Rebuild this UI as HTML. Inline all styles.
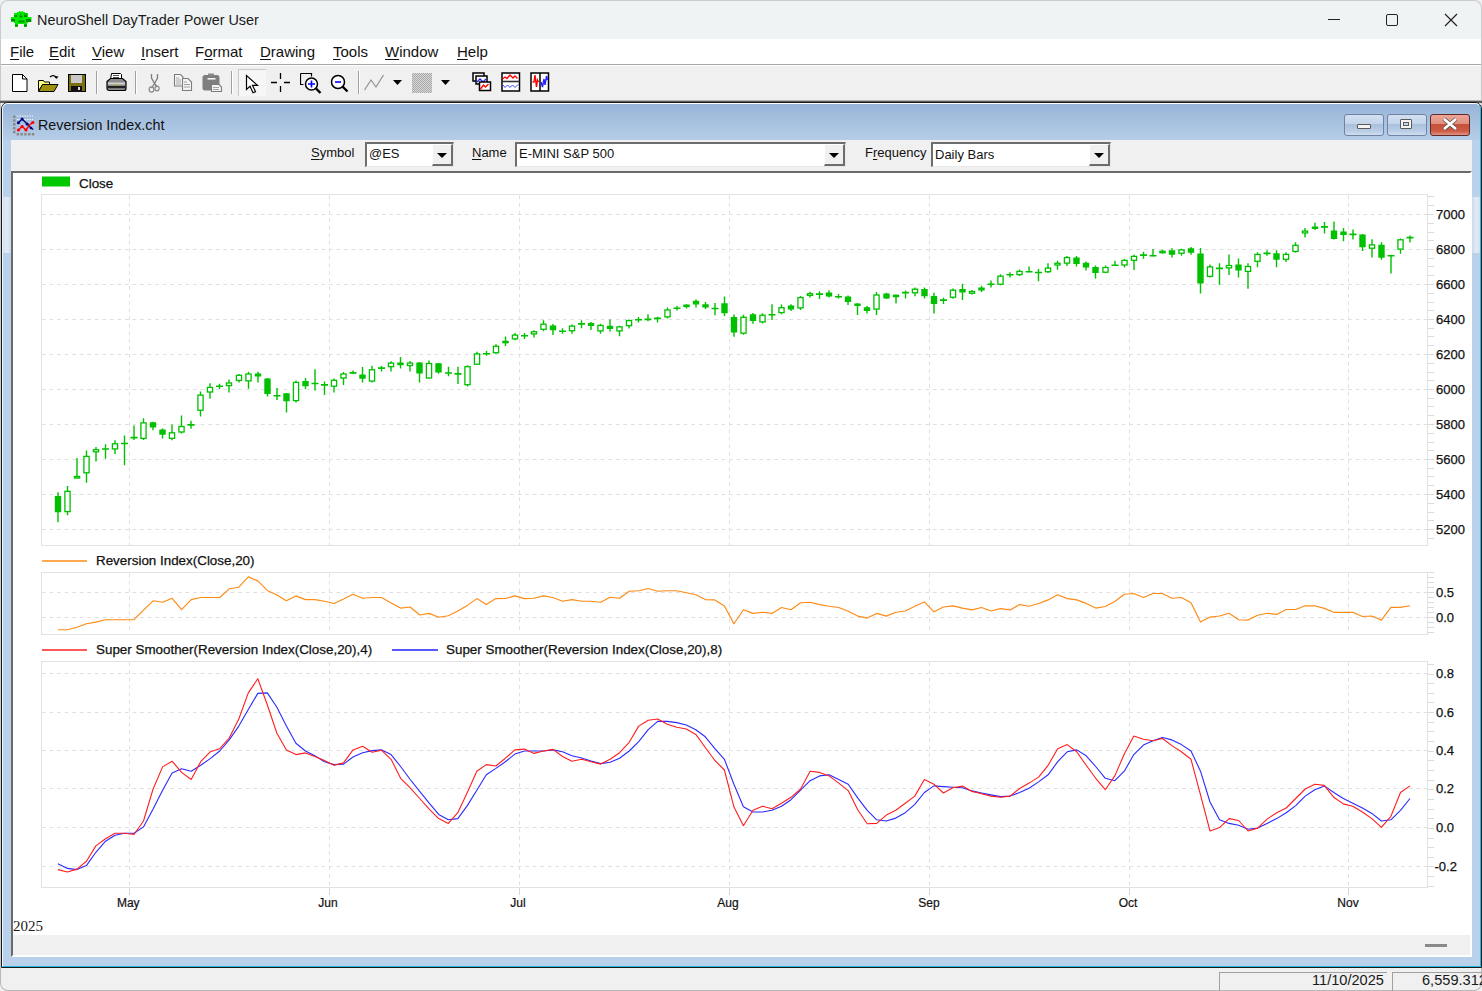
<!DOCTYPE html>
<html><head><meta charset="utf-8"><style>
*{box-sizing:border-box}
body{margin:0;width:1482px;height:991px;overflow:hidden;position:relative;background:#f0f0f0;font-family:"Liberation Sans",sans-serif;color:#000}
.a{position:absolute}
.ax{font-family:"Liberation Sans",sans-serif;font-size:13px;fill:#111;stroke:#111;stroke-width:0.25px}
.mo{font-family:"Liberation Sans",sans-serif;font-size:12px;fill:#111;stroke:#111;stroke-width:0.2px}
.yr{font-family:"Liberation Serif",serif;font-size:15px;fill:#1a1a1a}
.lg{font-family:"Liberation Sans",sans-serif;font-size:13.4px;fill:#111;stroke:#111;stroke-width:0.25px}
.menu span{position:absolute;top:42.5px;font-size:15px;color:#111}
.u{text-decoration:underline;text-underline-offset:2px}
.lbl{position:absolute;top:145px;font-size:13px;color:#111}
.combo{position:absolute;top:142px;height:25px;background:#fff;border-top:2px solid #6d6d6d;border-left:2px solid #6d6d6d;border-right:1px solid #e8e8e8;border-bottom:1px solid #e8e8e8}
.combo .t{position:absolute;left:2px;top:2px;font-size:13px;color:#111;white-space:nowrap}
.combo .b{position:absolute;right:0;top:0;width:21px;height:22px;background:#f0f0f0;border-right:2px solid #6d6d6d;border-bottom:2px solid #6d6d6d;border-left:1px solid #fff;border-top:1px solid #fff}
.combo .b:after{content:"";position:absolute;left:4px;top:8px;border-left:5px solid transparent;border-right:5px solid transparent;border-top:5px solid #000}
</style></head><body>
<!-- title bar -->
<div class="a" style="left:0;top:0;width:1482px;height:39px;background:#f0f3f3;border-radius:8px 8px 0 0;border:1px solid #c9cdd1;border-bottom:none"></div>
<svg class="a" style="left:0;top:0" width="40" height="34">
<path d="M19 11h1.5v1h1v-1h1.5v1h2v1h3v4h3.5v5h-3.5v1h-1v4h-3v-3h-6v3h-3v-4h-1v-1.5h-3V17h3v-4h3v-1h2z" fill="#00f000"/>
<path d="M11 19h4v2.5h-4zM26 19h5v3h-5zM18.5 20.5h6v2h-6zM14.5 15h2.5v2h-2.5zM19.5 15.5h3v2h-3zM24 15h3v2h-3zM17 13.5h1v1h-1zM20 13.5h1.5v1H20zM23.5 13.5h3.5v1h-3.5zM15 24.5h3v2h-3zM24 24.5h3v2h-3z" fill="#008c00"/>
</svg>
<div class="a" style="left:37px;top:12px;font-size:14.4px;color:#1a1a1a;white-space:nowrap">NeuroShell DayTrader Power User</div>
<div class="a" style="left:1328px;top:19px;width:12px;height:1px;background:#222"></div>
<div class="a" style="left:1386px;top:14px;width:12px;height:12px;border:1.2px solid #222;border-radius:2px"></div>
<svg class="a" style="left:1444px;top:13px" width="14" height="14"><path d="M1 1L13 13M13 1L1 13" stroke="#222" stroke-width="1.2"/></svg>
<div class="a" style="left:0;top:39px;width:1px;height:930px;background:#c8c8c8"></div>
<div class="a" style="left:1481px;top:39px;width:1px;height:930px;background:#c8c8c8"></div>
<!-- menu -->
<div class="a" style="left:1px;top:39px;width:1480px;height:25px;background:#fff"></div>
<div class="a menu">
<span style="left:10px"><span class="u" style="position:static">F</span>ile</span>
<span style="left:49px"><span class="u" style="position:static">E</span>dit</span>
<span style="left:92px"><span class="u" style="position:static">V</span>iew</span>
<span style="left:141px"><span class="u" style="position:static">I</span>nsert</span>
<span style="left:195px">F<span class="u" style="position:static">o</span>rmat</span>
<span style="left:260px"><span class="u" style="position:static">D</span>rawing</span>
<span style="left:333px"><span class="u" style="position:static">T</span>ools</span>
<span style="left:385px"><span class="u" style="position:static">W</span>indow</span>
<span style="left:457px"><span class="u" style="position:static">H</span>elp</span>
</div>
<div class="a" style="left:1px;top:64px;width:1480px;height:1px;background:#a8a8a8"></div>
<div class="a" style="left:1px;top:65px;width:1480px;height:1px;background:#fff"></div>
<!-- toolbar -->
<svg class="a" style="left:12px;top:74px" width="16" height="18"><path d="M0.5 0.5h10l4.5 4.5v12.5h-14.5z" fill="#fff" stroke="#000"/><path d="M10.5 0.5v4.5h4.5" fill="none" stroke="#000"/></svg>
<svg class="a" style="left:38px;top:74px" width="21" height="18"><path d="M12 3c2-2 5-2 6 1" fill="none" stroke="#000" stroke-width="1.3"/><path d="M17 2l1.5 3 2-2.5z" fill="#000"/><path d="M0.5 6.5h5l1 1.5h5v3H4.5l-4 6z" fill="#ffff80" stroke="#000"/><path d="M0.5 17.5l4-7h15.5l-4 7z" fill="#a09010" stroke="#000"/></svg>
<svg class="a" style="left:68px;top:74px" width="18" height="18"><rect x="0.5" y="0.5" width="17" height="17" fill="#7a7010" stroke="#000"/><rect x="3" y="1" width="11" height="8" fill="#c8c8c8"/><rect x="3" y="12" width="11" height="6" fill="#111"/><rect x="10" y="13" width="2" height="3" fill="#ddd"/></svg>
<div class="a" style="left:96px;top:71px;width:1px;height:23px;background:#a0a0a0;box-shadow:1px 0 0 #fff"></div>
<svg class="a" style="left:106px;top:73px" width="21" height="19"><path d="M5.5 0.5h9l1 1v5h-11z" fill="#fff" stroke="#000"/><path d="M7 2.5h6M7 4.5h6" stroke="#555"/><path d="M1 8.5l3.5-3h12l3.5 3v7c0 1-1 2-2 2H3c-1 0-2-1-2-2z" fill="#8c8c8c" stroke="#000" stroke-width="1.2"/><rect x="2" y="9.5" width="17" height="2" fill="#d0d0d0"/><rect x="1.5" y="13" width="18" height="2.2" fill="#222"/><path d="M9 12.3l1-1 1 1 1-1" stroke="#f0e000" stroke-width="1"/></svg>
<div class="a" style="left:135px;top:71px;width:1px;height:23px;background:#a0a0a0;box-shadow:1px 0 0 #fff"></div>
<svg class="a" style="left:140px;top:66px" width="90" height="32"><path d="M11.5 8v4l3 5.5M17.5 8v4l-3 5.5M14.5 17.5l-3 4.5M14.5 17.5l2.5 3.5" stroke="#7c7c7c" stroke-width="1.3" fill="none"/><ellipse cx="11.5" cy="23.5" rx="2.3" ry="2.6" fill="none" stroke="#8a8a8a" stroke-width="1.2"/><ellipse cx="17" cy="22.5" rx="2.1" ry="2.4" fill="none" stroke="#8a8a8a" stroke-width="1.2"/><path d="M34.5 8.5h6l2.5 2.5v9h-8.5z" fill="#f4f4f4" stroke="#7c7c7c" stroke-width="1.1"/><path d="M36 12h3M36 14h5M36 16h5M36 18h5" stroke="#a8a8a8"/><path d="M42.5 12.5h5.5l3.5 3.5v8.5h-9z" fill="#f4f4f4" stroke="#7c7c7c" stroke-width="1.1"/><path d="M44 16h3M44 18.5h6M44 21h6" stroke="#a0a0a0"/><rect x="62.5" y="9" width="17" height="15.5" rx="2.5" fill="#7e7e7e"/><rect x="68" y="7.5" width="6" height="2" fill="#8a8a8a"/><rect x="67.5" y="12" width="8" height="1.6" fill="#f0f0f0"/><path d="M71.5 18.5h7.5l2.5 2.5v4.5h-10z" fill="#f4f4f4" stroke="#7c7c7c" stroke-width="1.1"/><path d="M73 21.5h6M73 23.5h6" stroke="#a0a0a0"/></svg>
<div class="a" style="left:231px;top:71px;width:1px;height:23px;background:#a0a0a0;box-shadow:1px 0 0 #fff"></div>
<div class="a" style="left:238px;top:69px;width:28px;height:27px;background:#f6f6f6;border-top:1px solid #c8c8c8;border-left:1px solid #c8c8c8"></div>
<svg class="a" style="left:245px;top:74px" width="16" height="21"><path d="M1.5 1.5v14l3.5-3.2 3 6.5 2.5-1.2-3-6.2h5z" fill="#fff" stroke="#000" stroke-width="1.2"/></svg>
<svg class="a" style="left:270px;top:72px" width="21" height="21"><path d="M10.5 1v6M10.5 14v6M1 10.5h6M14 10.5h6" stroke="#000" stroke-width="1.3"/></svg>
<svg class="a" style="left:300px;top:72px" width="22" height="22"><path d="M0.5 1.5h11v3M0.5 1.5v11h3" fill="none" stroke="#000" stroke-width="1.2"/><circle cx="11.5" cy="12" r="6" fill="#fff" stroke="#000" stroke-width="1.5"/><path d="M16 16.5l4.5 4.5" stroke="#000" stroke-width="2.4"/><path d="M11.5 8.5v7M8 12h7" stroke="#0000ff" stroke-width="1.6"/></svg>
<svg class="a" style="left:330px;top:74px" width="20" height="20"><circle cx="8" cy="8" r="6.5" fill="#fff" stroke="#000" stroke-width="1.5"/><path d="M12.5 12.5l5 5" stroke="#000" stroke-width="2.4"/><path d="M5 8h6" stroke="#0000ff" stroke-width="1.6"/></svg>
<div class="a" style="left:358px;top:71px;width:1px;height:23px;background:#a0a0a0;box-shadow:1px 0 0 #fff"></div>
<svg class="a" style="left:364px;top:74px" width="21" height="17"><path d="M0.5 16L7 6l5 7L19.5 1" fill="none" stroke="#909090" stroke-width="1.2"/></svg>
<svg class="a" style="left:393px;top:80px" width="10" height="6"><path d="M0 0h9L4.5 5z" fill="#000"/></svg>
<div class="a" style="left:412px;top:73px;width:20px;height:20px;background:repeating-conic-gradient(#a8a8a8 0 25%,#d8d8d8 0 50%) 0 0/2px 2px"></div>
<svg class="a" style="left:441px;top:80px" width="10" height="6"><path d="M0 0h9L4.5 5z" fill="#000"/></svg>
<svg class="a" style="left:472px;top:72px" width="20" height="20"><rect x="1" y="1" width="11" height="8" fill="#fff" stroke="#000" stroke-width="1.5"/><rect x="4" y="4" width="11" height="8" fill="#fff" stroke="#000" stroke-width="1.5"/><path d="M5 10l3-3 3 3 3-3" stroke="#2020ff" stroke-width="1.3" fill="none"/><rect x="7.5" y="10" width="11" height="8.5" fill="#fff" stroke="#000" stroke-width="1.5"/><path d="M8.5 17l3-4 2 2 3-3" stroke="#ff0000" stroke-width="1.4" fill="none"/></svg>
<svg class="a" style="left:501px;top:72px" width="20" height="20"><rect x="1" y="1" width="17.5" height="18" fill="#fff" stroke="#000" stroke-width="1.5"/><path d="M1 9.5h17.5" stroke="#333" stroke-width="1.6"/><path d="M1.5 7l2.5-2 2 1.5 3-3.5 3 3 2-2 2.5 2.5" stroke="#ff0000" stroke-width="1.3" fill="none"/><path d="M1.5 12.5l2.5 3 2.5-2.5 2.5 2.5 2.5-2.5 2.5 2.5 3-3" stroke="#4040ff" stroke-width="1" fill="none"/></svg>
<svg class="a" style="left:530px;top:72px" width="20" height="20"><rect x="1" y="1" width="17.5" height="18" fill="#fff" stroke="#000" stroke-width="1.5"/><path d="M10 1v18" stroke="#000" stroke-width="1.5"/><path d="M2.5 10h1.5l1-7 1.5 12 1-7 1 2" stroke="#ff0000" stroke-width="1.4" fill="none"/><path d="M11 10l1.5 5 1.5-8 1 6 1.5-9 1 4" stroke="#2020ff" stroke-width="1.4" fill="none"/></svg>
<div class="a" style="left:0;top:100px;width:1482px;height:1px;background:#b4b4b4"></div>
<div class="a" style="left:0;top:101px;width:1482px;height:2px;background:#5a5a5a"></div>
<!-- child window -->
<div class="a" style="left:1px;top:102px;width:1481px;height:866px;background:#b9d1ea;border:1px solid #1a1a1a;border-radius:7px 7px 0 0"></div>
<div class="a" style="left:2px;top:103px;width:1479px;height:864px;border:1px solid #e8f4ff;border-top-color:#fff;border-bottom-color:#20b8e0;border-right-color:#20b8e0;border-radius:6px 6px 0 0"></div>
<div class="a" style="left:3px;top:104px;width:1477px;height:36px;background:linear-gradient(#98b4d8,#a8c2e0 55%,#b5cde7);border-radius:5px 5px 0 0"></div>
<svg class="a" style="left:0;top:100px" width="40" height="40">
<g fill="#8a8a8a"><rect x="13" y="15.5" width="2.5" height="2.5"/><rect x="13" y="19.3" width="2.5" height="2.5"/><rect x="13" y="23.1" width="2.5" height="2.5"/><rect x="13" y="27" width="2.5" height="2.5"/><rect x="13" y="30.8" width="2.5" height="2.5"/><rect x="16.6" y="33" width="2.5" height="2.5"/><rect x="20.4" y="33" width="2.5" height="2.5"/><rect x="24.2" y="33" width="2.5" height="2.5"/><rect x="28" y="33" width="2.5" height="2.5"/><rect x="31.8" y="33" width="2.5" height="2.5"/></g>
<path d="M17 16h16M17 19.5h16" stroke="#f4f4f4" stroke-width="1.2" stroke-dasharray="1.5 1"/>
<path d="M18.4 22.8L22.1 19l5 5 4 4 2.2 1.5" stroke="#000080" stroke-width="1.4" fill="none"/>
<g fill="#000080"><circle cx="18.4" cy="22.8" r="1.5"/><circle cx="22.1" cy="19" r="1.5"/><circle cx="27.1" cy="24" r="1.5"/><circle cx="31" cy="28" r="1.3"/></g>
<path d="M18.4 30l3.7-3.5 3.9 3.5 3.5-5 3.3-2.5" stroke="#ff0000" stroke-width="1.4" fill="none"/>
<g fill="#ff0000"><circle cx="18.4" cy="30" r="1.6"/><circle cx="22.1" cy="26.5" r="1.6"/><circle cx="26" cy="30" r="1.6"/><circle cx="32.8" cy="22.5" r="1.6"/></g>
</svg>
<div class="a" style="left:38px;top:117px;font-size:14.3px;color:#111;white-space:nowrap">Reversion Index.cht</div>
<div class="a" style="left:1344px;top:114px;width:40px;height:22px;border:1px solid #6f84a3;border-radius:3px;background:linear-gradient(#d2e0f1,#c3d5eb 45%,#a9bfdb 46%,#b9cde6 80%,#cfdff0)"></div>
<div class="a" style="left:1357px;top:124px;width:14px;height:5px;background:#f4f4f4;border:1px solid #5a5a5a;border-radius:1px"></div>
<div class="a" style="left:1387px;top:114px;width:40px;height:22px;border:1px solid #6f84a3;border-radius:3px;background:linear-gradient(#d2e0f1,#c3d5eb 45%,#a9bfdb 46%,#b9cde6 80%,#cfdff0)"></div>
<div class="a" style="left:1400px;top:119px;width:12px;height:10px;background:#f4f4f4;border:1px solid #5a5a5a;border-radius:1px"></div>
<div class="a" style="left:1403px;top:122px;width:6px;height:4px;border:1px solid #5a5a5a;background:#c8d8ec"></div>
<div class="a" style="left:1430px;top:114px;width:40px;height:22px;border:1px solid #5e2a2a;border-radius:3px;background:linear-gradient(#eea596,#e09080 45%,#c8503a 46%,#cc5a44 80%,#e09484)"></div>
<svg class="a" style="left:1441px;top:117px" width="18" height="14"><path d="M3 2l12 10M15 2L3 12" stroke="#555" stroke-width="4.2"/><path d="M3 2l12 10M15 2L3 12" stroke="#fff" stroke-width="2.6"/></svg>

<div class="a" style="left:3px;top:197px;width:8px;height:56px;background:linear-gradient(90deg,#d5e2f0,#e2ebf4 50%,#c9daee)"></div>
<div class="a" style="left:1472px;top:197px;width:8px;height:56px;background:linear-gradient(90deg,#c9daee,#e2ebf4 50%,#d5e2f0)"></div>
<!-- symbol bar -->
<div class="a" style="left:11px;top:140px;width:1461px;height:31px;background:#f0f0f0"></div>
<div class="lbl" style="left:311px"><span class="u">S</span>ymbol</div>
<div class="combo" style="left:365px;width:89px"><span class="t" style="left:2px">@ES</span><div class="b"></div></div>
<div class="lbl" style="left:472px"><span class="u">N</span>ame</div>
<div class="combo" style="left:515px;width:331px"><span class="t">E-MINI S&amp;P 500</span><div class="b"></div></div>
<div class="lbl" style="left:865px">F<span class="u">r</span>equency</div>
<div class="combo" style="left:931px;width:180px"><span class="t" style="top:3px">Daily Bars</span><div class="b"></div></div>
<!-- chart frame -->
<div class="a" style="left:11px;top:171px;width:1461px;height:786px;background:#f0f0f0;border-top:2px solid #6a6a6a;border-left:2px solid #6a6a6a;border-right:2px solid #fff;border-bottom:2px solid #fff"></div>
<div class="a" style="left:13px;top:173px;width:1457px;height:762px;background:#fff"></div>
<div class="a" style="left:1425px;top:944px;width:22px;height:3px;background:#8a8a8a"></div>
<svg class="a" style="left:0;top:0" width="1482" height="991"><rect x="41.5" y="194.5" width="1386.0" height="351.0" fill="#fff" stroke="#e2e2e2" stroke-width="1"/><line x1="129.5" y1="195.5" x2="129.5" y2="545.5" stroke="#e0e0e0" stroke-width="1" stroke-dasharray="3.7 3.85"/><line x1="329.5" y1="195.5" x2="329.5" y2="545.5" stroke="#e0e0e0" stroke-width="1" stroke-dasharray="3.7 3.85"/><line x1="519.5" y1="195.5" x2="519.5" y2="545.5" stroke="#e0e0e0" stroke-width="1" stroke-dasharray="3.7 3.85"/><line x1="729.5" y1="195.5" x2="729.5" y2="545.5" stroke="#e0e0e0" stroke-width="1" stroke-dasharray="3.7 3.85"/><line x1="929.5" y1="195.5" x2="929.5" y2="545.5" stroke="#e0e0e0" stroke-width="1" stroke-dasharray="3.7 3.85"/><line x1="1129.5" y1="195.5" x2="1129.5" y2="545.5" stroke="#e0e0e0" stroke-width="1" stroke-dasharray="3.7 3.85"/><line x1="1348.5" y1="195.5" x2="1348.5" y2="545.5" stroke="#e0e0e0" stroke-width="1" stroke-dasharray="3.7 3.85"/><rect x="41.5" y="572.5" width="1386.0" height="62.0" fill="#fff" stroke="#e2e2e2" stroke-width="1"/><line x1="129.5" y1="573.5" x2="129.5" y2="634.5" stroke="#e0e0e0" stroke-width="1" stroke-dasharray="3.7 3.85"/><line x1="329.5" y1="573.5" x2="329.5" y2="634.5" stroke="#e0e0e0" stroke-width="1" stroke-dasharray="3.7 3.85"/><line x1="519.5" y1="573.5" x2="519.5" y2="634.5" stroke="#e0e0e0" stroke-width="1" stroke-dasharray="3.7 3.85"/><line x1="729.5" y1="573.5" x2="729.5" y2="634.5" stroke="#e0e0e0" stroke-width="1" stroke-dasharray="3.7 3.85"/><line x1="929.5" y1="573.5" x2="929.5" y2="634.5" stroke="#e0e0e0" stroke-width="1" stroke-dasharray="3.7 3.85"/><line x1="1129.5" y1="573.5" x2="1129.5" y2="634.5" stroke="#e0e0e0" stroke-width="1" stroke-dasharray="3.7 3.85"/><line x1="1348.5" y1="573.5" x2="1348.5" y2="634.5" stroke="#e0e0e0" stroke-width="1" stroke-dasharray="3.7 3.85"/><rect x="41.5" y="661.5" width="1386.0" height="226.0" fill="#fff" stroke="#e2e2e2" stroke-width="1"/><line x1="129.5" y1="662.5" x2="129.5" y2="887.5" stroke="#e0e0e0" stroke-width="1" stroke-dasharray="3.7 3.85"/><line x1="329.5" y1="662.5" x2="329.5" y2="887.5" stroke="#e0e0e0" stroke-width="1" stroke-dasharray="3.7 3.85"/><line x1="519.5" y1="662.5" x2="519.5" y2="887.5" stroke="#e0e0e0" stroke-width="1" stroke-dasharray="3.7 3.85"/><line x1="729.5" y1="662.5" x2="729.5" y2="887.5" stroke="#e0e0e0" stroke-width="1" stroke-dasharray="3.7 3.85"/><line x1="929.5" y1="662.5" x2="929.5" y2="887.5" stroke="#e0e0e0" stroke-width="1" stroke-dasharray="3.7 3.85"/><line x1="1129.5" y1="662.5" x2="1129.5" y2="887.5" stroke="#e0e0e0" stroke-width="1" stroke-dasharray="3.7 3.85"/><line x1="1348.5" y1="662.5" x2="1348.5" y2="887.5" stroke="#e0e0e0" stroke-width="1" stroke-dasharray="3.7 3.85"/><line x1="42" y1="214.5" x2="1427" y2="214.5" stroke="#e0e0e0" stroke-width="1" stroke-dasharray="3.7 3.85"/><text x="1436" y="219" class="ax">7000</text><line x1="42" y1="249.5" x2="1427" y2="249.5" stroke="#e0e0e0" stroke-width="1" stroke-dasharray="3.7 3.85"/><text x="1436" y="254" class="ax">6800</text><line x1="42" y1="284.5" x2="1427" y2="284.5" stroke="#e0e0e0" stroke-width="1" stroke-dasharray="3.7 3.85"/><text x="1436" y="289" class="ax">6600</text><line x1="42" y1="319.5" x2="1427" y2="319.5" stroke="#e0e0e0" stroke-width="1" stroke-dasharray="3.7 3.85"/><text x="1436" y="324" class="ax">6400</text><line x1="42" y1="354.5" x2="1427" y2="354.5" stroke="#e0e0e0" stroke-width="1" stroke-dasharray="3.7 3.85"/><text x="1436" y="359" class="ax">6200</text><line x1="42" y1="389.5" x2="1427" y2="389.5" stroke="#e0e0e0" stroke-width="1" stroke-dasharray="3.7 3.85"/><text x="1436" y="394" class="ax">6000</text><line x1="42" y1="424.5" x2="1427" y2="424.5" stroke="#e0e0e0" stroke-width="1" stroke-dasharray="3.7 3.85"/><text x="1436" y="429" class="ax">5800</text><line x1="42" y1="459.5" x2="1427" y2="459.5" stroke="#e0e0e0" stroke-width="1" stroke-dasharray="3.7 3.85"/><text x="1436" y="464" class="ax">5600</text><line x1="42" y1="494.5" x2="1427" y2="494.5" stroke="#e0e0e0" stroke-width="1" stroke-dasharray="3.7 3.85"/><text x="1436" y="499" class="ax">5400</text><line x1="42" y1="529.5" x2="1427" y2="529.5" stroke="#e0e0e0" stroke-width="1" stroke-dasharray="3.7 3.85"/><text x="1436" y="534" class="ax">5200</text><line x1="1428" y1="196.5" x2="1434" y2="196.5" stroke="#dadada"/><line x1="1428" y1="205.5" x2="1434" y2="205.5" stroke="#dadada"/><line x1="1428" y1="214.5" x2="1434" y2="214.5" stroke="#dadada"/><line x1="1428" y1="223.5" x2="1434" y2="223.5" stroke="#dadada"/><line x1="1428" y1="232.5" x2="1434" y2="232.5" stroke="#dadada"/><line x1="1428" y1="240.5" x2="1434" y2="240.5" stroke="#dadada"/><line x1="1428" y1="249.5" x2="1434" y2="249.5" stroke="#dadada"/><line x1="1428" y1="258.5" x2="1434" y2="258.5" stroke="#dadada"/><line x1="1428" y1="266.5" x2="1434" y2="266.5" stroke="#dadada"/><line x1="1428" y1="275.5" x2="1434" y2="275.5" stroke="#dadada"/><line x1="1428" y1="284.5" x2="1434" y2="284.5" stroke="#dadada"/><line x1="1428" y1="293.5" x2="1434" y2="293.5" stroke="#dadada"/><line x1="1428" y1="302.5" x2="1434" y2="302.5" stroke="#dadada"/><line x1="1428" y1="310.5" x2="1434" y2="310.5" stroke="#dadada"/><line x1="1428" y1="319.5" x2="1434" y2="319.5" stroke="#dadada"/><line x1="1428" y1="328.5" x2="1434" y2="328.5" stroke="#dadada"/><line x1="1428" y1="336.5" x2="1434" y2="336.5" stroke="#dadada"/><line x1="1428" y1="345.5" x2="1434" y2="345.5" stroke="#dadada"/><line x1="1428" y1="354.5" x2="1434" y2="354.5" stroke="#dadada"/><line x1="1428" y1="363.5" x2="1434" y2="363.5" stroke="#dadada"/><line x1="1428" y1="372.5" x2="1434" y2="372.5" stroke="#dadada"/><line x1="1428" y1="380.5" x2="1434" y2="380.5" stroke="#dadada"/><line x1="1428" y1="389.5" x2="1434" y2="389.5" stroke="#dadada"/><line x1="1428" y1="398.5" x2="1434" y2="398.5" stroke="#dadada"/><line x1="1428" y1="406.5" x2="1434" y2="406.5" stroke="#dadada"/><line x1="1428" y1="415.5" x2="1434" y2="415.5" stroke="#dadada"/><line x1="1428" y1="424.5" x2="1434" y2="424.5" stroke="#dadada"/><line x1="1428" y1="433.5" x2="1434" y2="433.5" stroke="#dadada"/><line x1="1428" y1="442.5" x2="1434" y2="442.5" stroke="#dadada"/><line x1="1428" y1="450.5" x2="1434" y2="450.5" stroke="#dadada"/><line x1="1428" y1="459.5" x2="1434" y2="459.5" stroke="#dadada"/><line x1="1428" y1="468.5" x2="1434" y2="468.5" stroke="#dadada"/><line x1="1428" y1="476.5" x2="1434" y2="476.5" stroke="#dadada"/><line x1="1428" y1="485.5" x2="1434" y2="485.5" stroke="#dadada"/><line x1="1428" y1="494.5" x2="1434" y2="494.5" stroke="#dadada"/><line x1="1428" y1="503.5" x2="1434" y2="503.5" stroke="#dadada"/><line x1="1428" y1="512.5" x2="1434" y2="512.5" stroke="#dadada"/><line x1="1428" y1="520.5" x2="1434" y2="520.5" stroke="#dadada"/><line x1="1428" y1="529.5" x2="1434" y2="529.5" stroke="#dadada"/><line x1="1428" y1="538.5" x2="1434" y2="538.5" stroke="#dadada"/><line x1="42" y1="592.5" x2="1427" y2="592.5" stroke="#e0e0e0" stroke-width="1" stroke-dasharray="3.7 3.85"/><text x="1436" y="597" class="ax">0.5</text><line x1="42" y1="617.5" x2="1427" y2="617.5" stroke="#e0e0e0" stroke-width="1" stroke-dasharray="3.7 3.85"/><text x="1436" y="622" class="ax">0.0</text><line x1="1428" y1="572.5" x2="1434" y2="572.5" stroke="#dadada"/><line x1="1428" y1="577.5" x2="1434" y2="577.5" stroke="#dadada"/><line x1="1428" y1="582.5" x2="1434" y2="582.5" stroke="#dadada"/><line x1="1428" y1="587.5" x2="1434" y2="587.5" stroke="#dadada"/><line x1="1428" y1="592.5" x2="1434" y2="592.5" stroke="#dadada"/><line x1="1428" y1="597.5" x2="1434" y2="597.5" stroke="#dadada"/><line x1="1428" y1="602.5" x2="1434" y2="602.5" stroke="#dadada"/><line x1="1428" y1="607.5" x2="1434" y2="607.5" stroke="#dadada"/><line x1="1428" y1="612.5" x2="1434" y2="612.5" stroke="#dadada"/><line x1="1428" y1="617.5" x2="1434" y2="617.5" stroke="#dadada"/><line x1="1428" y1="622.5" x2="1434" y2="622.5" stroke="#dadada"/><line x1="1428" y1="627.5" x2="1434" y2="627.5" stroke="#dadada"/><line x1="1428" y1="632.5" x2="1434" y2="632.5" stroke="#dadada"/><line x1="42" y1="673.5" x2="1427" y2="673.5" stroke="#e0e0e0" stroke-width="1" stroke-dasharray="3.7 3.85"/><text x="1436" y="678" class="ax">0.8</text><line x1="42" y1="712.5" x2="1427" y2="712.5" stroke="#e0e0e0" stroke-width="1" stroke-dasharray="3.7 3.85"/><text x="1436" y="717" class="ax">0.6</text><line x1="42" y1="750.5" x2="1427" y2="750.5" stroke="#e0e0e0" stroke-width="1" stroke-dasharray="3.7 3.85"/><text x="1436" y="755" class="ax">0.4</text><line x1="42" y1="788.5" x2="1427" y2="788.5" stroke="#e0e0e0" stroke-width="1" stroke-dasharray="3.7 3.85"/><text x="1436" y="793" class="ax">0.2</text><line x1="42" y1="827.5" x2="1427" y2="827.5" stroke="#e0e0e0" stroke-width="1" stroke-dasharray="3.7 3.85"/><text x="1436" y="832" class="ax">0.0</text><line x1="42" y1="866.5" x2="1427" y2="866.5" stroke="#e0e0e0" stroke-width="1" stroke-dasharray="3.7 3.85"/><text x="1434.5" y="871" class="ax">-0.2</text><line x1="1428" y1="664.5" x2="1434" y2="664.5" stroke="#dadada"/><line x1="1428" y1="674.5" x2="1434" y2="674.5" stroke="#dadada"/><line x1="1428" y1="683.5" x2="1434" y2="683.5" stroke="#dadada"/><line x1="1428" y1="693.5" x2="1434" y2="693.5" stroke="#dadada"/><line x1="1428" y1="702.5" x2="1434" y2="702.5" stroke="#dadada"/><line x1="1428" y1="712.5" x2="1434" y2="712.5" stroke="#dadada"/><line x1="1428" y1="722.5" x2="1434" y2="722.5" stroke="#dadada"/><line x1="1428" y1="731.5" x2="1434" y2="731.5" stroke="#dadada"/><line x1="1428" y1="741.5" x2="1434" y2="741.5" stroke="#dadada"/><line x1="1428" y1="751.5" x2="1434" y2="751.5" stroke="#dadada"/><line x1="1428" y1="760.5" x2="1434" y2="760.5" stroke="#dadada"/><line x1="1428" y1="770.5" x2="1434" y2="770.5" stroke="#dadada"/><line x1="1428" y1="780.5" x2="1434" y2="780.5" stroke="#dadada"/><line x1="1428" y1="789.5" x2="1434" y2="789.5" stroke="#dadada"/><line x1="1428" y1="799.5" x2="1434" y2="799.5" stroke="#dadada"/><line x1="1428" y1="809.5" x2="1434" y2="809.5" stroke="#dadada"/><line x1="1428" y1="818.5" x2="1434" y2="818.5" stroke="#dadada"/><line x1="1428" y1="828.5" x2="1434" y2="828.5" stroke="#dadada"/><line x1="1428" y1="838.5" x2="1434" y2="838.5" stroke="#dadada"/><line x1="1428" y1="847.5" x2="1434" y2="847.5" stroke="#dadada"/><line x1="1428" y1="857.5" x2="1434" y2="857.5" stroke="#dadada"/><line x1="1428" y1="866.5" x2="1434" y2="866.5" stroke="#dadada"/><line x1="1428" y1="876.5" x2="1434" y2="876.5" stroke="#dadada"/><line x1="1428" y1="886.5" x2="1434" y2="886.5" stroke="#dadada"/><line x1="129.5" y1="888" x2="129.5" y2="895" stroke="#d6d6d6"/><text x="128.3" y="906.5" class="mo" text-anchor="middle">May</text><line x1="329.5" y1="888" x2="329.5" y2="895" stroke="#d6d6d6"/><text x="328" y="906.5" class="mo" text-anchor="middle">Jun</text><line x1="519.5" y1="888" x2="519.5" y2="895" stroke="#d6d6d6"/><text x="518" y="906.5" class="mo" text-anchor="middle">Jul</text><line x1="729.5" y1="888" x2="729.5" y2="895" stroke="#d6d6d6"/><text x="728" y="906.5" class="mo" text-anchor="middle">Aug</text><line x1="929.5" y1="888" x2="929.5" y2="895" stroke="#d6d6d6"/><text x="929" y="906.5" class="mo" text-anchor="middle">Sep</text><line x1="1129.5" y1="888" x2="1129.5" y2="895" stroke="#d6d6d6"/><text x="1128" y="906.5" class="mo" text-anchor="middle">Oct</text><line x1="1348.5" y1="888" x2="1348.5" y2="895" stroke="#d6d6d6"/><text x="1348" y="906.5" class="mo" text-anchor="middle">Nov</text><text x="13" y="931" class="yr">2025</text><rect x="42" y="176.5" width="28" height="10" fill="#00c800"/><text x="79" y="187.5" class="lg">Close</text><line x1="42" y1="561" x2="87" y2="561" stroke="#ff8c1a" stroke-width="1.3"/><text x="96" y="565" class="lg">Reversion Index(Close,20)</text><line x1="42" y1="650" x2="87" y2="650" stroke="#ff2020" stroke-width="1.3"/><text x="96" y="654" class="lg">Super Smoother(Reversion Index(Close,20),4)</text><line x1="392" y1="650" x2="438" y2="650" stroke="#2020ff" stroke-width="1.3"/><text x="446" y="654" class="lg">Super Smoother(Reversion Index(Close,20),8)</text><path d="M58 492.2V522.3M67.5 485.9V515.2M77 458.1V478.6M86.5 450.4V482.7M96 447V461.4M105.5 444.3V458.7M115 440.3V453.9M124.5 435.5V465.2M134 425.5V439.9M143.5 418.2V439.9M153 421.7V430.3M162.5 428.4V438.6M172 424.6V440.3M181.5 415.6V433.6M191 420.7V428.8M200.5 391.6V416.5M210 383.3V398.7M219.5 383.7V389.1M229 379.5V392.5M239 374.1V382.4M248.5 371.8V388.7M258 371.8V382.4M267.5 378V396.4M277 388.1V400M286.5 392.9V412.5M296 380.5V402.5M305.5 378V389.1M315 369.3V390.4M324.5 381.6V395.1M334 378.6V392.6M343.5 372.1V384.9M353 370.5V373.8M362.5 367.1V382.4M372 365.7V382.4M381.5 365.7V371.5M391 361.3V371.5M400.5 357.1V368.6M410 360.9V371.5M419.5 361.9V382.4M429 360.6V378.6M438.5 362.9V373.8M448.5 366.7V376.3M458 366.7V383.9M467.5 365.2V386.4M477 351.7V364.8M486.5 351V355.8M496 344.3V353.8M505.5 336.6V346M515 333.1V340.2M524.5 333.1V338.9M534 330.3V337.5M543.5 320.3V331.2M553 324.1V335.1M562.5 328.3V333.7M572 324.5V333.7M581.5 320.3V328.3M591 321.9V330.1M600.5 323.8V333.8M610 319.4V331.5M619.5 325.7V336.3M629 319.4V328.6M638.5 317.1V322.5M648 314.2V321.3M657.5 316.7V322.5M667.5 307.5V318.6M677 306V310.4M686.5 304.3V308.5M696 299.5V307.5M705.5 302.1V309M715 303.1V315.2M724.5 296.6V316.1M734 314.6V336.7M743.5 314.8V334.7M753 312.9V323.8M762.5 313.3V323.4M772 304.3V320M781.5 304.6V314.2M791 304.3V311M800.5 296V310M810 291.8V297.5M819.5 291.2V298.9M829 290.3V297.5M838.5 294.1V298.5M848 295.6V305M857.5 303V315.1M867 305.9V313.5M876.5 292.1V315.1M886.5 292.8V299.1M896 294.4V303.6M905.5 290.5V298.6M915 287.6V296.3M924.5 287.6V298.6M934 292.8V313.5M943.5 297.8V303.9M953 288.6V298.8M962.5 283.8V300.1M972 290.1V294.4M981.5 285.7V292.1M991 280.6V287.6M1000.5 274.2V285.2M1010 272.3V277.5M1019.5 269.4V276.1M1029 266.6V272.3M1038.5 269V281.3M1048 263.3V272.9M1057.5 260.8V269.8M1067 256V266M1076.5 256V266.6M1086 261.4V270.4M1095.5 265.6V278.6M1105.5 265.6V273.3M1115 260.8V266M1124.5 258.9V267.5M1134 254.8V270M1143.5 251.7V258.8M1153 249.1V256.2M1162.5 249.7V253.4M1172 248.3V257.4M1181.5 248.7V255.8M1191 247.1V254.8M1200.5 248.1V293.6M1210 264.5V277.4M1219.5 263.3V284.7M1229 254.4V275M1238.5 258.4V277.4M1248 263.3V288.8M1257.5 252.3V267.3M1267 250.3V255.8M1276.5 250.3V267.3M1286 252.3V261.9M1295.5 242.2V252.8M1305 228.1V237.6M1315 222.8V230.1M1324.5 222V233.5M1334 221.4V239.6M1343.5 228.1V241.2M1353 229.5V239.6M1362.5 234.1V251.1M1372 239.2V257.4M1381.5 242.2V259.8M1391 254.8V273.4M1400.5 238.6V253.8M1410 235.5V242.6" stroke="#00c000" stroke-width="1.4" fill="none"/><path d="M54.8 496.1h6.4V512.2h-6.4zM102 448.2h7v1.6h-7zM121 442.7h7v1.6h-7zM130.5 436.8h7v1.6h-7zM149.8 422.3h6.4V427.4h-6.4zM159.3 429.4h6.4V434.7h-6.4zM187.5 424.1h7v1.6h-7zM216 385.5h7v1.6h-7zM254.8 373.4h6.4V376.6h-6.4zM264.3 378.6h6.4V393.9h-6.4zM273.5 395h7v1.6h-7zM283.3 393.3h6.4V401.2h-6.4zM302.3 380.9h6.4V386.2h-6.4zM311.5 382.7h7v1.6h-7zM321 384.1h7v1.6h-7zM349.5 372.1h7v1.6h-7zM359.3 374.4h6.4V378.8h-6.4zM378 367.3h7v1.6h-7zM397.3 362.5h6.4V365.2h-6.4zM416.3 362.5h6.4V373.4h-6.4zM435.3 363.2h6.4V372.4h-6.4zM445 372.2h7v1.6h-7zM454.5 373.1h7v1.6h-7zM483 352.9h7v1.6h-7zM521 335h7v1.6h-7zM549.8 325.5h6.4V330.3h-6.4zM559 330.5h7v1.6h-7zM578 323.1h7v1.6h-7zM587.8 322.9h6.4V326.1h-6.4zM606.8 325.7h6.4V329h-6.4zM635 319h7v1.6h-7zM644.5 318.6h7v1.6h-7zM654 317.6h7v1.6h-7zM673.5 307.5h7v1.6h-7zM692.8 300.8h6.4V304.6h-6.4zM702.3 304.3h6.4V307.5h-6.4zM711.5 307.7h7v1.6h-7zM721.3 303.3h6.4V313.3h-6.4zM730.8 317.1h6.4V332.4h-6.4zM749.8 314.2h6.4V320.9h-6.4zM768.5 313.9h7v1.6h-7zM787.8 305.6h6.4V309.4h-6.4zM816 293.3h7v1.6h-7zM825.8 292.6h6.4V296.6h-6.4zM835 296h7v1.6h-7zM844.8 296.6h6.4V302.1h-6.4zM854.3 303.4h6.4V305.9h-6.4zM863.8 307.2h6.4V311h-6.4zM883.3 293.4h6.4V298.6h-6.4zM902 291.8h7v1.6h-7zM921.3 289h6.4V296.3h-6.4zM930.8 295.9h6.4V303.9h-6.4zM940 299.3h7v1.6h-7zM959.3 289h6.4V292.4h-6.4zM978.3 287.6h6.4V290.5h-6.4zM987.5 283.5h7v1.6h-7zM1006.5 273.9h7v1.6h-7zM1025.5 271h7v1.6h-7zM1035 271.7h7v1.6h-7zM1073.3 257.5h6.4V264.1h-6.4zM1082.8 262.7h6.4V267.5h-6.4zM1092.3 266.9h6.4V272.9h-6.4zM1111.5 264.5h7v1.6h-7zM1140 254.3h7v1.6h-7zM1149.5 254.9h7v1.6h-7zM1168.8 250.3h6.4V254.8h-6.4zM1187.8 248.3h6.4V252.8h-6.4zM1197.3 253.4h6.4V283.5h-6.4zM1216 267.6h7v1.6h-7zM1235.3 264.5h6.4V270.6h-6.4zM1263.5 252.6h7v1.6h-7zM1273.3 253.2h6.4V259.8h-6.4zM1311.8 226.4h6.4V229.1h-6.4zM1321 226.1h7v1.6h-7zM1330.8 230.5h6.4V239h-6.4zM1340.3 231.5h6.4V234.9h-6.4zM1349.5 233.6h7v1.6h-7zM1359.3 234.5h6.4V247.3h-6.4zM1378.3 244.7h6.4V257.8h-6.4zM1387.5 254.9h7v1.6h-7zM1406.5 236.8h7v1.6h-7z" fill="#00c000"/><rect x="64.9" y="491.3" width="5.2" height="20.3" fill="#fff" stroke="#00c000" stroke-width="1.3"/><rect x="74.4" y="476.5" width="5.2" height="1.5" fill="#fff" stroke="#00c000" stroke-width="1.3"/><rect x="83.9" y="456.4" width="5.2" height="16.4" fill="#fff" stroke="#00c000" stroke-width="1.3"/><rect x="93.4" y="449.7" width="5.2" height="2.1" fill="#fff" stroke="#00c000" stroke-width="1.3"/><rect x="112.4" y="443.8" width="5.2" height="5.1" fill="#fff" stroke="#00c000" stroke-width="1.3"/><rect x="140.9" y="422.9" width="5.2" height="15.5" fill="#fff" stroke="#00c000" stroke-width="1.3"/><rect x="169.4" y="432.8" width="5.2" height="5.5" fill="#fff" stroke="#00c000" stroke-width="1.3"/><rect x="178.9" y="426.5" width="5.2" height="5.5" fill="#fff" stroke="#00c000" stroke-width="1.3"/><rect x="197.9" y="395.1" width="5.2" height="15.1" fill="#fff" stroke="#00c000" stroke-width="1.3"/><rect x="207.4" y="387.4" width="5.2" height="4.6" fill="#fff" stroke="#00c000" stroke-width="1.3"/><rect x="226.4" y="383" width="5.2" height="2.6" fill="#fff" stroke="#00c000" stroke-width="1.3"/><rect x="236.4" y="375.3" width="5.2" height="5.1" fill="#fff" stroke="#00c000" stroke-width="1.3"/><rect x="245.9" y="374" width="5.2" height="6.9" fill="#fff" stroke="#00c000" stroke-width="1.3"/><rect x="293.4" y="382.4" width="5.2" height="18.2" fill="#fff" stroke="#00c000" stroke-width="1.3"/><rect x="331.4" y="380.3" width="5.2" height="5.9" fill="#fff" stroke="#00c000" stroke-width="1.3"/><rect x="340.9" y="374" width="5.2" height="4" fill="#fff" stroke="#00c000" stroke-width="1.3"/><rect x="369.4" y="369.8" width="5.2" height="11.3" fill="#fff" stroke="#00c000" stroke-width="1.3"/><rect x="388.4" y="363.1" width="5.2" height="3.6" fill="#fff" stroke="#00c000" stroke-width="1.3"/><rect x="407.4" y="363.1" width="5.2" height="2.4" fill="#fff" stroke="#00c000" stroke-width="1.3"/><rect x="426.4" y="363.5" width="5.2" height="14.5" fill="#fff" stroke="#00c000" stroke-width="1.3"/><rect x="464.9" y="366.7" width="5.2" height="18" fill="#fff" stroke="#00c000" stroke-width="1.3"/><rect x="474.4" y="353.9" width="5.2" height="10.3" fill="#fff" stroke="#00c000" stroke-width="1.3"/><rect x="493.4" y="346.2" width="5.2" height="6.5" fill="#fff" stroke="#00c000" stroke-width="1.3"/><rect x="502.9" y="341.4" width="5.2" height="1.3" fill="#fff" stroke="#00c000" stroke-width="1.3"/><rect x="512.4" y="335.1" width="5.2" height="3.8" fill="#fff" stroke="#00c000" stroke-width="1.3"/><rect x="531.4" y="331.8" width="5.2" height="2.1" fill="#fff" stroke="#00c000" stroke-width="1.3"/><rect x="540.9" y="324.2" width="5.2" height="5.1" fill="#fff" stroke="#00c000" stroke-width="1.3"/><rect x="569.4" y="326.1" width="5.2" height="4.6" fill="#fff" stroke="#00c000" stroke-width="1.3"/><rect x="597.9" y="325.4" width="5.2" height="5.5" fill="#fff" stroke="#00c000" stroke-width="1.3"/><rect x="616.9" y="326.9" width="5.2" height="4" fill="#fff" stroke="#00c000" stroke-width="1.3"/><rect x="626.4" y="320.6" width="5.2" height="5.1" fill="#fff" stroke="#00c000" stroke-width="1.3"/><rect x="664.9" y="310" width="5.2" height="6.9" fill="#fff" stroke="#00c000" stroke-width="1.3"/><rect x="683.9" y="305.2" width="5.2" height="1.3" fill="#fff" stroke="#00c000" stroke-width="1.3"/><rect x="740.9" y="317.3" width="5.2" height="15.9" fill="#fff" stroke="#00c000" stroke-width="1.3"/><rect x="759.9" y="315.2" width="5.2" height="6.7" fill="#fff" stroke="#00c000" stroke-width="1.3"/><rect x="778.9" y="307.7" width="5.2" height="4.9" fill="#fff" stroke="#00c000" stroke-width="1.3"/><rect x="797.9" y="297.6" width="5.2" height="10.3" fill="#fff" stroke="#00c000" stroke-width="1.3"/><rect x="807.4" y="293.7" width="5.2" height="1.7" fill="#fff" stroke="#00c000" stroke-width="1.3"/><rect x="873.9" y="295" width="5.2" height="14.1" fill="#fff" stroke="#00c000" stroke-width="1.3"/><rect x="893.4" y="295.3" width="5.2" height="1.3" fill="#fff" stroke="#00c000" stroke-width="1.3"/><rect x="912.4" y="289.2" width="5.2" height="3.6" fill="#fff" stroke="#00c000" stroke-width="1.3"/><rect x="950.4" y="290.2" width="5.2" height="7" fill="#fff" stroke="#00c000" stroke-width="1.3"/><rect x="969.4" y="291.5" width="5.2" height="1.7" fill="#fff" stroke="#00c000" stroke-width="1.3"/><rect x="997.9" y="276.2" width="5.2" height="8" fill="#fff" stroke="#00c000" stroke-width="1.3"/><rect x="1016.9" y="271.4" width="5.2" height="3.2" fill="#fff" stroke="#00c000" stroke-width="1.3"/><rect x="1045.4" y="268.1" width="5.2" height="3.6" fill="#fff" stroke="#00c000" stroke-width="1.3"/><rect x="1054.9" y="263.3" width="5.2" height="1.7" fill="#fff" stroke="#00c000" stroke-width="1.3"/><rect x="1064.4" y="257.6" width="5.2" height="5.5" fill="#fff" stroke="#00c000" stroke-width="1.3"/><rect x="1102.9" y="267.5" width="5.2" height="4.7" fill="#fff" stroke="#00c000" stroke-width="1.3"/><rect x="1121.9" y="260.4" width="5.2" height="4.6" fill="#fff" stroke="#00c000" stroke-width="1.3"/><rect x="1131.4" y="256.4" width="5.2" height="3.9" fill="#fff" stroke="#00c000" stroke-width="1.3"/><rect x="1159.9" y="251.3" width="5.2" height="1.4" fill="#fff" stroke="#00c000" stroke-width="1.3"/><rect x="1178.9" y="249.9" width="5.2" height="3.3" fill="#fff" stroke="#00c000" stroke-width="1.3"/><rect x="1207.4" y="266.9" width="5.2" height="9.5" fill="#fff" stroke="#00c000" stroke-width="1.3"/><rect x="1226.4" y="265.5" width="5.2" height="2.4" fill="#fff" stroke="#00c000" stroke-width="1.3"/><rect x="1245.4" y="266.5" width="5.2" height="4.9" fill="#fff" stroke="#00c000" stroke-width="1.3"/><rect x="1254.9" y="254.4" width="5.2" height="6.9" fill="#fff" stroke="#00c000" stroke-width="1.3"/><rect x="1283.4" y="254.4" width="5.2" height="4.9" fill="#fff" stroke="#00c000" stroke-width="1.3"/><rect x="1292.9" y="245.3" width="5.2" height="6.1" fill="#fff" stroke="#00c000" stroke-width="1.3"/><rect x="1302.4" y="231.1" width="5.2" height="1.8" fill="#fff" stroke="#00c000" stroke-width="1.3"/><rect x="1369.4" y="244.9" width="5.2" height="3.3" fill="#fff" stroke="#00c000" stroke-width="1.3"/><rect x="1397.9" y="239.8" width="5.2" height="9.3" fill="#fff" stroke="#00c000" stroke-width="1.3"/><polyline points="57.9,629.7 67.4,629.7 76.9,627.2 86.4,623.7 95.9,622.1 105.5,619.7 115,619.7 124.5,619.7 134,619.7 143.5,610.2 153.1,600.8 162.6,602.3 172.1,598.3 181.6,609.7 191.2,599.6 200.7,597.5 210.2,597.5 219.7,597.5 229.2,588.8 238.8,587.2 248.3,576.9 257.8,580.9 267.3,590.4 276.9,595.1 286.4,600.7 295.9,595.9 305.4,599.6 314.9,599.6 324.5,601.2 334,603.5 343.5,599.1 353,594.3 362.6,598.3 372.1,597.5 381.6,597.5 391.1,603.1 400.6,608.1 410.2,607 419.7,615 429.2,613.4 438.7,617.3 448.3,615.7 457.8,611 467.3,605.4 476.8,598.6 486.3,604.6 495.9,598.6 505.4,598.5 514.9,595.9 524.4,598.6 534,598.3 543.5,595.9 553,597.5 562.5,601.2 572,599.6 581.6,601.2 591.1,601.2 600.6,602.3 610.1,597.2 619.6,598.3 629.2,591.2 638.7,590.7 648.2,588.5 657.7,591.2 667.3,590.7 676.8,590.7 686.3,592.8 695.8,594.8 705.3,599.6 714.9,599.9 724.4,605.9 733.9,623.7 743.4,609.7 753,613.4 762.5,612.3 772,613.4 781.5,607.5 791,609.7 800.6,602.7 810.1,602.3 819.6,604.6 829.1,606.2 838.7,607.5 848.2,611.3 857.7,616.1 867.2,618.1 876.7,613.4 886.3,616.1 895.8,612.3 905.3,611 914.8,606.2 924.4,601.9 933.9,611.8 943.4,607 952.9,605.9 962.4,608.1 972,609.9 981.5,607.5 991,611 1000.5,608.6 1010.1,609.9 1019.6,604.6 1029.1,606.2 1038.6,603.5 1048.1,599.9 1057.7,594.8 1067.2,598.6 1076.7,599.9 1086.2,603.4 1095.7,608.1 1105.3,606.5 1114.8,601.5 1124.3,594.3 1133.8,593.5 1143.4,597.5 1152.9,593.5 1162.4,593.5 1171.9,598.3 1181.4,597.5 1191,602.7 1200.5,622 1210,617.1 1219.5,616 1229.1,613.3 1238.6,619.7 1248.1,620.1 1257.6,615.2 1267.1,613.3 1276.7,614.4 1286.2,609.5 1295.7,609.5 1305.2,605.8 1314.8,605.8 1324.3,608.4 1333.8,612.3 1343.3,612.3 1352.8,612.3 1362.4,616.5 1371.9,616 1381.4,620.1 1390.9,607.4 1400.5,607.4 1410,605.8" fill="none" stroke="#ff8a14" stroke-width="1.15" stroke-linejoin="round"/><polyline points="57.9,863.7 67.4,868.4 76.9,869.6 86.4,865.6 95.9,852.3 105.5,841.2 115,835.2 124.5,833.3 134,833.3 143.5,826.9 153.1,809.1 162.6,790.2 172.1,772.9 181.6,768.8 191.2,771.2 200.7,765.3 210.2,758.6 219.7,751 229.2,739.9 238.8,726.1 248.3,709.5 257.8,693.4 267.3,692.9 276.9,707.2 286.4,726.1 295.9,743.2 305.4,751 314.9,755.8 324.5,761.7 334,764.6 343.5,764.1 353,757 362.6,752.7 372.1,750.6 381.6,749.9 391.1,754.6 400.6,766.5 410.2,779.5 419.7,791.4 429.2,803.2 438.7,814.4 448.3,819.8 457.8,818.6 467.3,805.6 476.8,790.2 486.3,774.8 495.9,768.4 505.4,761.7 514.9,754.1 524.4,751 534,751 543.5,751 553,749.9 562.5,751.8 572,755.8 581.6,758 591.1,761.1 600.6,763.6 610.1,762.2 619.6,758.2 629.2,751 638.7,741.6 648.2,729.7 657.7,721.4 667.3,721.4 676.8,722.6 686.3,725 695.8,729.7 705.3,736.8 714.9,748.7 724.4,759.3 733.9,784.2 743.4,806.8 753,812 762.5,812 772,810.3 781.5,806.3 791,799.7 800.6,790.2 810.1,780.7 819.6,775.9 829.1,774.8 838.7,779.5 848.2,784.2 857.7,797.9 867.2,810.3 876.7,819.8 886.3,821 895.8,818.1 905.3,812.7 914.8,804.4 924.4,792.5 933.9,785.9 943.4,786.6 952.9,787.3 962.4,787.8 972,790.9 981.5,793 991,794.9 1000.5,796.6 1010.1,796.1 1019.6,792.5 1029.1,788.3 1038.6,781.9 1048.1,774.8 1057.7,761.7 1067.2,751.8 1076.7,749.9 1086.2,755.8 1095.7,766.5 1105.3,778.3 1114.8,780.7 1124.3,771.2 1133.8,754.6 1143.4,745.1 1152.9,740.8 1162.4,737.5 1171.9,739.9 1181.4,744.6 1191,751 1200.5,771.2 1210,802 1219.5,819.8 1229.1,823.4 1238.6,825.3 1248.1,829.3 1257.6,828.1 1267.1,823.4 1276.7,818.6 1286.2,812.7 1295.7,805.6 1305.2,796.1 1314.8,789.7 1324.3,785.9 1333.8,792.5 1343.3,798.5 1352.8,803.2 1362.4,808 1371.9,813.4 1381.4,821 1390.9,819.8 1400.5,810.3 1410,798.5" fill="none" stroke="#2a2aff" stroke-width="1.1" stroke-linejoin="round"/><polyline points="57.9,869.6 67.4,872 76.9,869.1 86.4,861.3 95.9,845.9 105.5,838.8 115,833.3 124.5,833.3 134,834.5 143.5,821 153.1,789 162.6,766.9 172.1,761.2 181.6,772.4 191.2,779.5 200.7,761.7 210.2,751.8 219.7,748.7 229.2,738 238.8,719 248.3,692.9 257.8,678.7 267.3,704.8 276.9,733.3 286.4,749.9 295.9,754.6 305.4,752.9 314.9,756.5 324.5,760.5 334,765.3 343.5,762.9 353,749.9 362.6,746.3 372.1,752.2 381.6,750.3 391.1,759.3 400.6,778.3 410.2,787.8 419.7,798.5 429.2,809.1 438.7,818.6 448.3,823.4 457.8,812.7 467.3,792.5 476.8,771.2 486.3,764.6 495.9,766 505.4,758.2 514.9,749.9 524.4,749.1 534,753.4 543.5,751 553,749.4 562.5,756.5 572,761.2 581.6,759.3 591.1,761.7 600.6,764.1 610.1,759.3 619.6,752.7 629.2,742.3 638.7,726.1 648.2,720.2 657.7,719 667.3,724.2 676.8,727.3 686.3,729 695.8,734.4 705.3,747.5 714.9,760.5 724.4,770 733.9,806.8 743.4,825.7 753,810.3 762.5,806.3 772,808.7 781.5,803.2 791,797.3 800.6,789 810.1,771.2 819.6,772.4 829.1,775.9 838.7,783.1 848.2,790.6 857.7,809.7 867.2,823.8 876.7,823.4 886.3,815.1 895.8,810.3 905.3,803.2 914.8,796.1 924.4,779.5 933.9,784.2 943.4,793 952.9,787.8 962.4,786.1 972,791.4 981.5,793.7 991,796.1 1000.5,797.3 1010.1,796.1 1019.6,788.5 1029.1,783.1 1038.6,777.1 1048.1,765.3 1057.7,748.7 1067.2,744.6 1076.7,751.8 1086.2,765.3 1095.7,778.3 1105.3,789.7 1114.8,775.9 1124.3,754 1133.8,736.1 1143.4,739.2 1152.9,740.8 1162.4,738.5 1171.9,745.6 1181.4,751.8 1191,759.3 1200.5,794.9 1210,831 1219.5,827.6 1229.1,818.6 1238.6,820.5 1248.1,831 1257.6,828.1 1267.1,819.1 1276.7,812.7 1286.2,808 1295.7,798.5 1305.2,789 1314.8,784.2 1324.3,785.4 1333.8,797.3 1343.3,803.9 1352.8,806.3 1362.4,812 1371.9,818.6 1381.4,827.4 1390.9,816.3 1400.5,792.5 1410,785.9" fill="none" stroke="#ff1e1e" stroke-width="1.1" stroke-linejoin="round"/></svg>
<!-- status bar -->
<div class="a" style="left:0;top:968px;width:1482px;height:23px;background:#f0f0f0;border-radius:0 0 8px 8px;border:1px solid #b8b8b8;border-top:none"></div>
<div class="a" style="left:1219px;top:972px;width:168px;height:19px;border-top:1px solid #a0a0a0;border-left:1px solid #a0a0a0"></div>
<div class="a" style="left:1312px;top:972px;font-size:14.6px;color:#1a1a1a">11/10/2025</div>
<div class="a" style="left:1392px;top:972px;width:90px;height:19px;border-top:1px solid #a0a0a0;border-left:1px solid #a0a0a0"></div>
<div class="a" style="left:1422px;top:972px;font-size:14.6px;color:#1a1a1a;white-space:nowrap">6,559.312</div>
</body></html>
